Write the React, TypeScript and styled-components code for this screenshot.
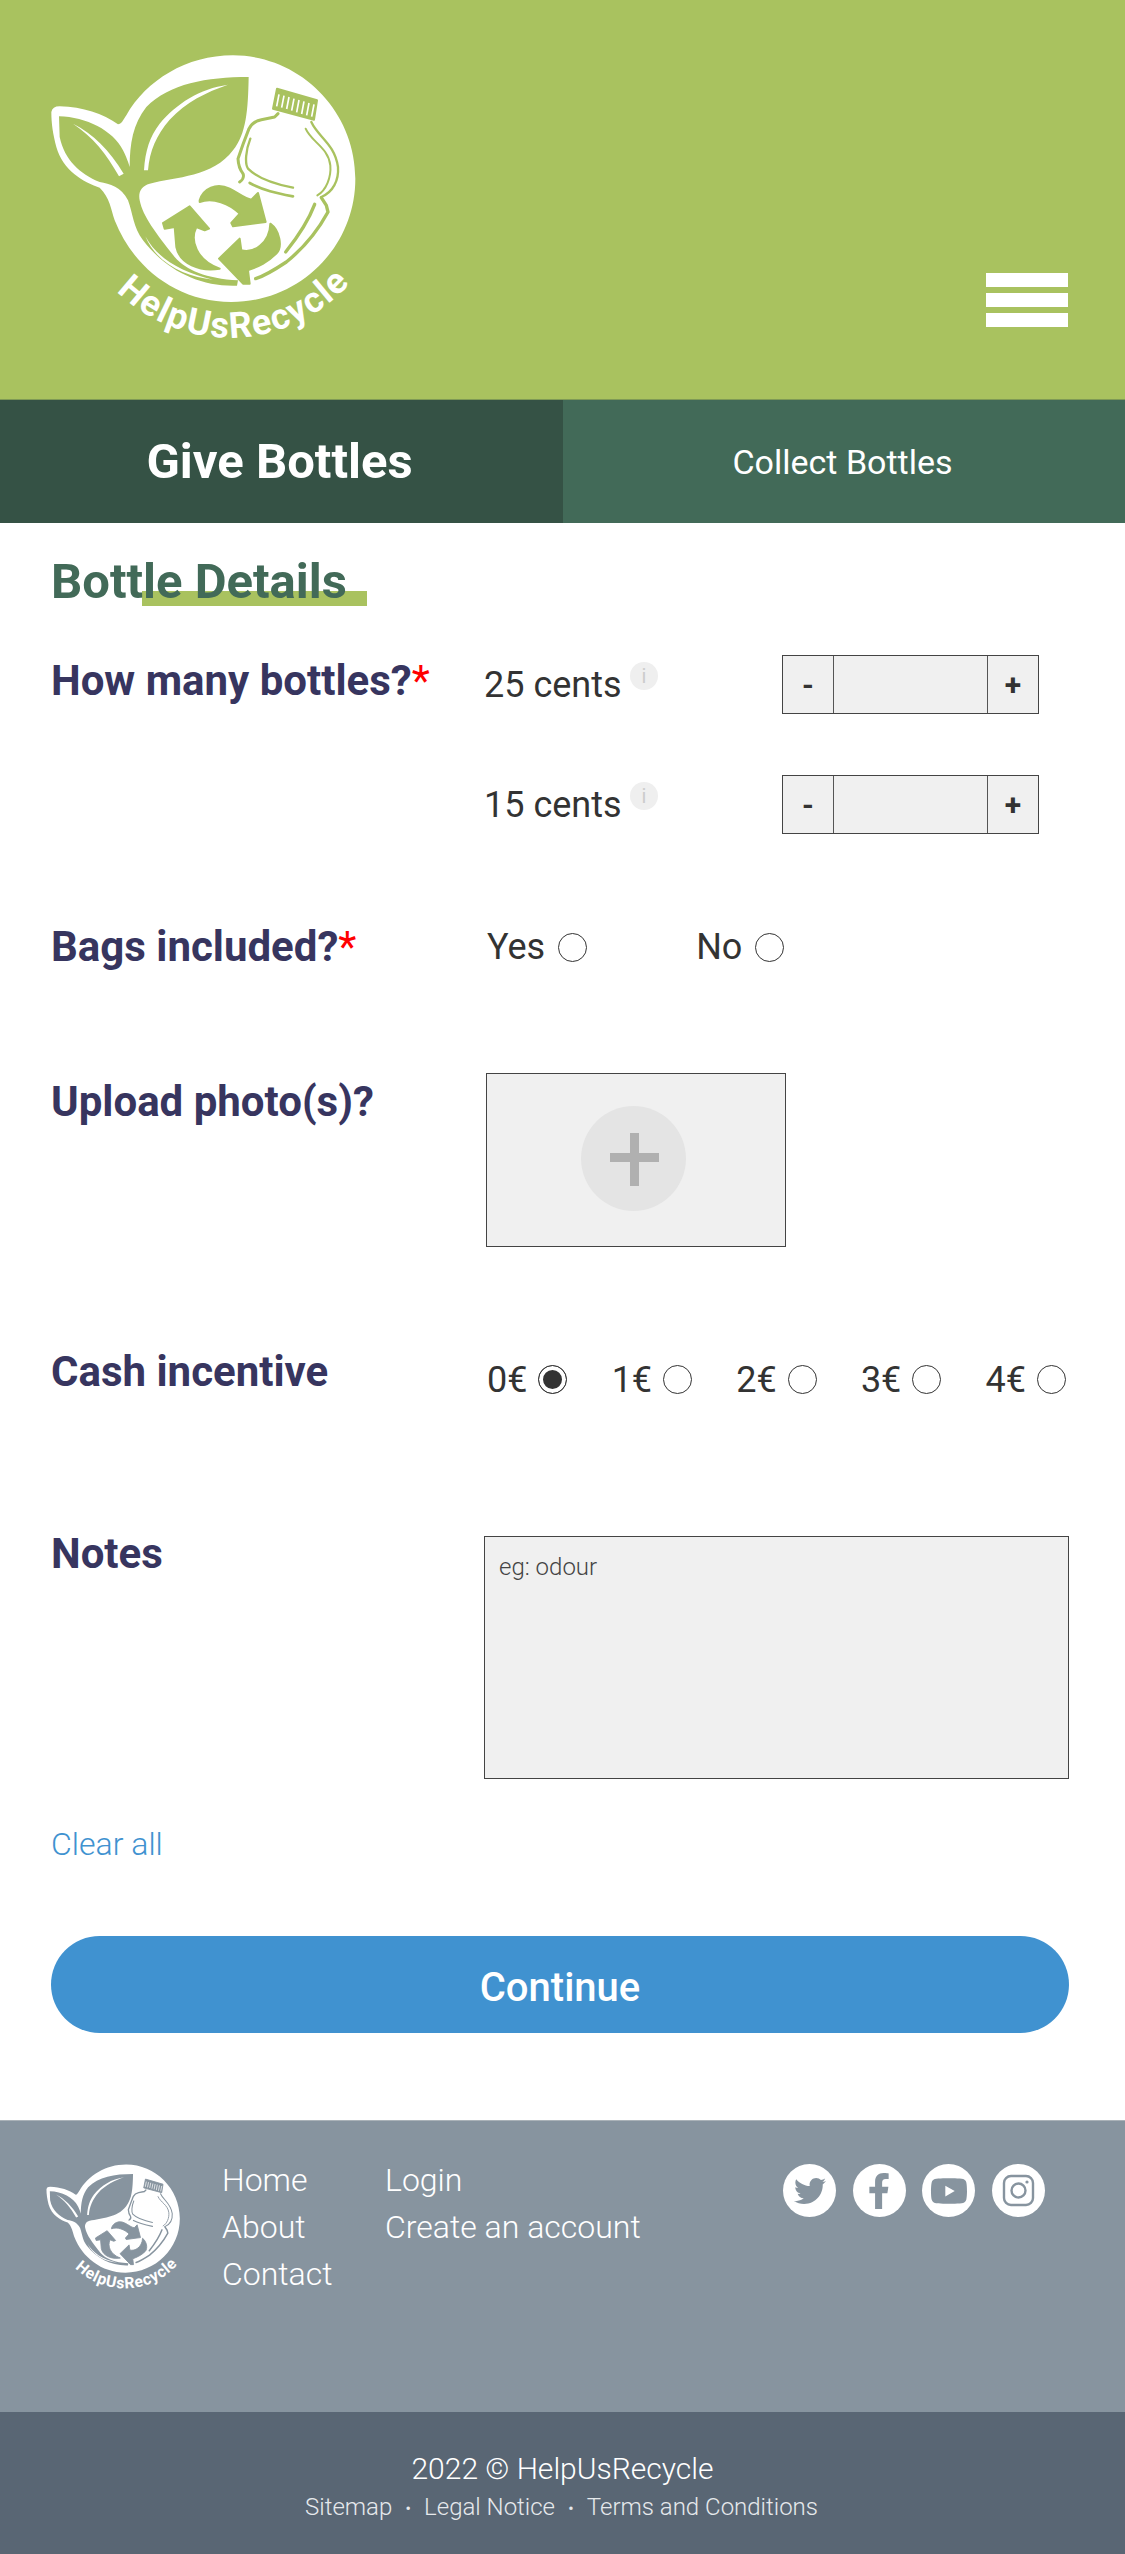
import React from "react";
import styled, { createGlobalStyle } from "styled-components";
import { FaTwitter, FaFacebookF, FaYoutube } from "react-icons/fa";

const GlobalStyle = createGlobalStyle`
  html, body {
    margin: 0;
    padding: 0;
    background: #fff;
    font-family: Roboto, "Liberation Sans", sans-serif;
    color: #333;
  }
  * { box-sizing: border-box; }
`;

const Page = styled.div`
  width: 1125px;
  height: 2554px;
  display: flex;
  flex-direction: column;
  overflow: hidden;
`;

const Header = styled.header`
  height: 400px;
  background: #a9c25f;
  display: flex;
  justify-content: space-between;
  align-items: flex-start;
  padding: 52px 57px 72px 48px;
  border-bottom: 1px solid #7f9a55;
`;

const Burger = styled.div`
  align-self: flex-end;
  width: 82px;
  display: flex;
  flex-direction: column;
  gap: 6px;
  span {
    display: block;
    height: 14px;
    background: #fff;
  }
`;

const Tabs = styled.nav`
  height: 123px;
  display: grid;
  grid-template-columns: 563px 562px;
`;

const Tab = styled.div<{ $active?: boolean }>`
  display: flex;
  align-items: center;
  justify-content: center;
  color: #fff;
  background: ${(p) => (p.$active ? "#355245" : "#426a58")};
  font-size: ${(p) => (p.$active ? "49px" : "34px")};
  font-weight: ${(p) => (p.$active ? 700 : 400)};
  padding-right: ${(p) => (p.$active ? "4px" : "3px")};
`;

const Main = styled.main`
  flex: 1;
  padding: 31px 56px 0 51px;
`;

const Title = styled.h2`
  position: relative;
  isolation: isolate;
  margin: 0 0 45px;
  width: fit-content;
  font-size: 49px;
  line-height: 56px;
  font-weight: 700;
  color: #426a58;
  &::after {
    content: "";
    position: absolute;
    z-index: -1;
    left: 91px;
    top: 37px;
    width: 225px;
    height: 15px;
    background: #a9c25f;
  }
`;

const Row = styled.section<{ $gap: number }>`
  display: grid;
  grid-template-columns: 433px 1fr;
  margin-bottom: ${(p) => p.$gap}px;
`;

const Label = styled.h3<{ $top?: number }>`
  margin: 0;
  padding-top: ${(p) => p.$top ?? 3}px;
  font-size: 42px;
  line-height: 46px;
  font-weight: 700;
  color: #37355f;
  b {
    color: #f00;
    font-weight: 400;
  }
`;

const Counts = styled.div`
  display: flex;
  flex-direction: column;
  gap: 61px;
`;

const CountRow = styled.div`
  display: flex;
  height: 59px;
`;

const CountName = styled.span`
  width: 146px;
  font-size: 36px;
  line-height: 59px;
  padding-top: 1px;
`;

const Info = styled.span`
  width: 28px;
  height: 28px;
  margin-top: 7px;
  border-radius: 50%;
  background: #efefef;
  color: #ccc;
  font-size: 20px;
  line-height: 28px;
  text-align: center;
`;

const Stepper = styled.div`
  margin-left: auto;
  margin-right: 30px;
  width: 257px;
  height: 59px;
  display: grid;
  grid-template-columns: 50px 1fr 50px;
  border: 1px solid #444;
  background: #f0f0f0;
`;

const StepButton = styled.button`
  border: 0;
  padding: 0;
  background: transparent;
  color: #333;
  font-family: inherit;
  font-size: 30px;
  font-weight: 700;
`;

const StepInput = styled.input`
  width: 100%;
  min-width: 0;
  border: 0;
  border-left: 1px solid #555;
  border-right: 1px solid #555;
  background: transparent;
`;

const Radios = styled.div`
  display: flex;
  align-items: center;
  height: 49px;
  padding: 3px 0 0 3px;
  gap: 109px;
`;

const CashRadios = styled(Radios)`
  justify-content: space-between;
  gap: 0;
  height: 52px;
  padding: 15px 3px 0 3px;
  label {
    gap: 11px;
  }
`;

const RadioLabel = styled.label`
  display: flex;
  align-items: center;
  gap: 13px;
  font-size: 36px;
  line-height: 46px;
`;

const Radio = styled.input.attrs({ type: "radio" })`
  appearance: none;
  margin: 0;
  width: 29px;
  height: 29px;
  border-radius: 50%;
  border: 1px solid #333;
  background: #fff;
  &:checked {
    background: #333;
    box-shadow: inset 0 0 0 4px #fff;
  }
`;

const UploadBox = styled.div`
  margin-left: 2px;
  width: 300px;
  height: 174px;
  padding: 0 6px 3px 0;
  background: #f0f0f0;
  border: 1px solid #444;
  display: flex;
  align-items: center;
  justify-content: center;
`;

const UploadCircle = styled.div`
  width: 105px;
  height: 105px;
  border-radius: 50%;
  background: #e4e4e4;
  position: relative;
  &::before,
  &::after {
    content: "";
    position: absolute;
    background: #b0b0b0;
  }
  &::before {
    left: 29px;
    right: 27px;
    top: 47px;
    height: 9px;
  }
  &::after {
    left: 49px;
    width: 9px;
    top: 27px;
    bottom: 25px;
  }
`;

const Notes = styled.textarea`
  display: block;
  margin-top: 8px;
  width: 585px;
  height: 243px;
  resize: none;
  border: 1px solid #444;
  border-radius: 0;
  background: #f0f0f0;
  padding: 15px 14px;
  font-family: inherit;
  font-size: 24px;
  line-height: 30px;
  font-weight: 300;
  &::placeholder {
    color: #444;
    opacity: 1;
  }
`;

const ClearAll = styled.a`
  display: block;
  font-size: 32px;
  line-height: 40px;
  font-weight: 300;
  color: #4092d0;
  margin: 45px 0 72px;
`;

const Continue = styled.button`
  display: block;
  width: 1018px;
  height: 97px;
  padding: 5px 0 0;
  border: 0;
  border-radius: 49px;
  background: #4092d0;
  color: #fff;
  font-family: inherit;
  font-size: 40px;
  font-weight: 500;
`;

const FooterTop = styled.footer`
  height: 292px;
  background: #87949f;
  border-top: 1px solid #aab2b8;
  display: flex;
  align-items: flex-start;
  padding: 42px 0 0 45px;
  color: #fff;
`;

const FootLinks = styled.ul<{ $width: number }>`
  list-style: none;
  margin: 0;
  padding: 0;
  width: ${(p) => p.$width}px;
  font-size: 32px;
  font-weight: 300;
  line-height: 47px;
  margin-top: -6px;
`;

const SiteLinks = styled(FootLinks)`
  margin-left: 41px;
`;

const Socials = styled.div`
  display: flex;
  gap: 16.6px;
  margin-top: 1px;
`;

const Social = styled.a`
  width: 53px;
  height: 53px;
  border-radius: 50%;
  background: #fff;
  color: #87949f;
  display: flex;
  align-items: center;
  justify-content: center;
`;

const FooterBottom = styled.div`
  height: 142px;
  background: #596674;
  color: #fff;
  text-align: center;
  padding-top: 37px;
`;

const Copy = styled.p`
  margin: 0;
  font-size: 30px;
  font-weight: 300;
  line-height: 40px;
`;

const Legal = styled.p`
  margin: 2px 0 0;
  padding-right: 2px;
  font-size: 24px;
  font-weight: 300;
  line-height: 32px;
  color: #e6e9ec;
  span {
    margin: 0 13px;
    font-size: 18px;
  }
`;

const LogoSvg = styled.svg`
  display: block;
  flex-shrink: 0;
  overflow: visible;
`;

// logo is traced in the coordinates of a 3x crop, width sets the scale
const Logo = ({ ink, width }: { ink: string; width: number }) => (
  <LogoSvg width={width} height={(width * 880) / 930} viewBox="145 155 930 880">
    <path
      fill="#fff"
      d="M155 335Q158 318 180 318C250 320 310 340 355 372C365 372 370 360 380 345C440 240 560 165 700 165C900 165 1067 330 1067 535C1067 740 900 905 695 905C530 905 400 800 345 660C335 630 330 590 300 562C250 545 190 510 170 440C160 400 155 370 155 335Z"
    />
    <path
      fill={ink}
      d="M747 230C745 330 740 400 700 450C640 530 530 530 450 550C425 557 415 575 420 600C430 650 470 700 525 770C560 810 620 835 715 840L712 856C600 860 500 810 430 720C400 680 400 640 385 600C365 560 330 550 300 545C240 520 195 480 180 410L178 348C260 350 340 390 370 450C385 480 390 500 390 500C390 430 400 370 440 320C510 250 620 230 747 230Z"
    />
    <g fill="#fff">
      <path d="M685 253C600 265 530 310 480 370C450 410 437 450 433 510L445 510C450 450 470 405 510 358C560 305 620 275 685 253Z" />
      <path d="M220 370C280 400 330 450 372 520L358 528C320 460 280 410 220 370Z" />
      <path d="M437 708C470 770 540 815 640 838C560 830 470 790 437 708Z" />
    </g>
    <g fill={ink} stroke={ink} strokeWidth="6" strokeLinejoin="round">
      <path d="M832 265L952 300L943 358L820 325Z" />
      <path d="M600 600C610 565 650 545 690 565C720 580 735 595 755 598L775 578L798 665L700 678L695 668L720 640C690 610 640 590 600 605Z" />
      <path d="M490 668L570 618L628 685L615 690L590 680C570 720 590 780 660 805C600 815 540 790 530 740L525 680L495 685Z" />
      <path d="M812 670C840 690 850 740 830 760C800 790 770 800 745 810L750 850L730 850L658 775L720 715L725 750C760 760 810 730 812 670Z" />
    </g>
    <path
      stroke="#fff"
      strokeWidth="5"
      fill="none"
      d="M838 282L831 318M853 286L846 322M868 290L861 326M883 295L876 331M898 299L891 336M913 303L906 341M928 308L921 345M943 312L936 349"
    />
    <g stroke={ink} fill="none" strokeLinecap="round" strokeLinejoin="round">
      <path strokeWidth="9" d="M835 340L825 350L785 358C765 362 755 372 748 385C738 410 725 445 715 475C716 495 722 510 730 520C734 530 728 540 720 545" />
      <path strokeWidth="7" d="M752 415C738 450 735 490 745 505C775 535 830 552 880 562" />
      <path strokeWidth="8" d="M750 548C790 570 830 578 880 588" />
      <path strokeWidth="7" d="M935 365C955 410 1005 430 1015 500C1018 540 1000 575 965 590" />
      <path strokeWidth="6" d="M918 385C935 425 985 440 992 495C995 530 980 570 953 585" />
      <path strokeWidth="10" d="M945 612C925 665 890 715 858 755" />
      <path strokeWidth="10" d="M965 592L980 615L985 635C955 690 910 745 860 785C830 805 800 825 768 835" />
    </g>
    <defs>
      <path id={`logo-arc-${width}`} d="M350 872A482 482 0 0 0 1075 820" />
    </defs>
    <text fill="#fff" fontFamily="Roboto, sans-serif" fontWeight="700" fontSize="108" letterSpacing="4.5">
      <textPath href={`#logo-arc-${width}`}>HelpUsRecycle</textPath>
    </text>
  </LogoSvg>
);

const InstaIcon = () => (
  <svg width="33" height="33" viewBox="0 0 33 33" fill="none" stroke="#87949f">
    <rect x="2" y="2" width="29" height="29" rx="7" strokeWidth="2.4" />
    <circle cx="16.5" cy="16.5" r="7" strokeWidth="2.4" />
    <circle cx="25" cy="8" r="1.6" fill="#87949f" stroke="none" />
  </svg>
);

const cash = ["0€", "1€", "2€", "3€", "4€"];

const App = () => {
  return (
    <Page>
      <GlobalStyle />
      <Header>
        <Logo ink="#a9c25f" width={310} />
        <Burger>
          <span />
          <span />
          <span />
        </Burger>
      </Header>
      <Tabs>
        <Tab $active>Give Bottles</Tab>
        <Tab>Collect Bottles</Tab>
      </Tabs>
      <Main>
        <Title>Bottle Details</Title>
        <Row $gap={87}>
          <Label>
            How many bottles?<b>*</b>
          </Label>
          <Counts>
            {["25 cents", "15 cents"].map((c) => (
              <CountRow key={c}>
                <CountName>{c}</CountName>
                <Info>i</Info>
                <Stepper>
                  <StepButton>-</StepButton>
                  <StepInput />
                  <StepButton>+</StepButton>
                </Stepper>
              </CountRow>
            ))}
          </Counts>
        </Row>
        <Row $gap={103}>
          <Label>
            Bags included?<b>*</b>
          </Label>
          <Radios>
            <RadioLabel>
              Yes <Radio name="bags" />
            </RadioLabel>
            <RadioLabel>
              No <Radio name="bags" />
            </RadioLabel>
          </Radios>
        </Row>
        <Row $gap={99}>
          <Label $top={6}>Upload photo(s)?</Label>
          <UploadBox>
            <UploadCircle />
          </UploadBox>
        </Row>
        <Row $gap={130}>
          <Label>Cash incentive</Label>
          <CashRadios>
            {cash.map((c, i) => (
              <RadioLabel key={c}>
                {c} <Radio name="cash" defaultChecked={i === 0} />
              </RadioLabel>
            ))}
          </CashRadios>
        </Row>
        <Row $gap={0}>
          <Label>Notes</Label>
          <Notes placeholder="eg: odour" />
        </Row>
        <ClearAll>Clear all</ClearAll>
        <Continue>Continue</Continue>
      </Main>
      <FooterTop>
        <Logo ink="#87949f" width={136} />
        <SiteLinks $width={163}>
          <li>Home</li>
          <li>About</li>
          <li>Contact</li>
        </SiteLinks>
        <FootLinks $width={398}>
          <li>Login</li>
          <li>Create an account</li>
        </FootLinks>
        <Socials>
          <Social>
            <FaTwitter size={32} />
          </Social>
          <Social>
            <FaFacebookF size={36} />
          </Social>
          <Social>
            <FaYoutube size={38} />
          </Social>
          <Social>
            <InstaIcon />
          </Social>
        </Socials>
      </FooterTop>
      <FooterBottom>
        <Copy>2022 © HelpUsRecycle</Copy>
        <Legal>
          Sitemap<span>•</span>Legal Notice<span>•</span>Terms and Conditions
        </Legal>
      </FooterBottom>
    </Page>
  );
};

export default App;
